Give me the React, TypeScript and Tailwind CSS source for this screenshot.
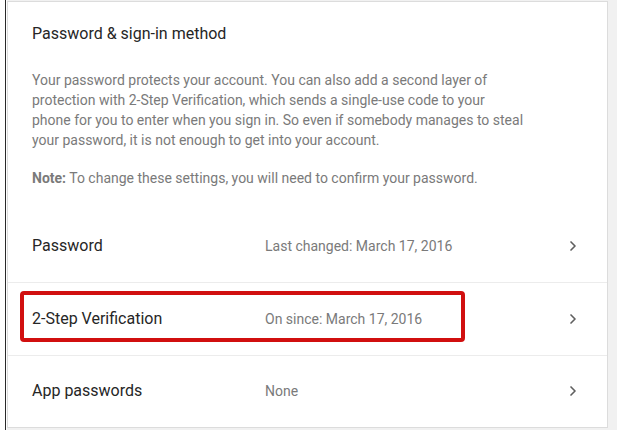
import { ChevronRight } from "lucide-react";

const rows = [
  { label: "Password", value: "Last changed: March 17, 2016" },
  { label: "2-Step Verification", value: "On since: March 17, 2016", marked: true },
  { label: "App passwords", value: "None" },
];

export default function App() {
  return (
    <div className="flex w-[617px] h-[430px] bg-white overflow-hidden" style={{ fontFamily: "Roboto, 'Liberation Sans', sans-serif" }}>
      <div className="w-[5px] shrink-0" />
      <div className="w-[1px] shrink-0 bg-[#2a2a2a]" />
      <div className="w-[1px] shrink-0" />
      <div className="flex-1 bg-[#f1f1f1] pt-[1px]">
        <div className="w-[601px] h-[427px] bg-white border border-[#dcdcdc] flex flex-col">
          {/* header */}
          <div className="px-6 pt-[22px] pb-[22px]">
            <h2 className="text-[16px] leading-5 text-[#262626]">Password &amp; sign-in method</h2>
            <p className="mt-[26px] w-[492px] text-[14px] leading-5 text-[#7a7a7a]">
              Your password protects your account. You can also add a second layer of protection with 2-Step
              Verification, which sends a single-use code to your phone for you to enter when you sign in. So even
              if somebody manages to steal your password, it is not enough to get into your account.
            </p>
            <p className="mt-[18px] text-[14px] leading-5 text-[#7a7a7a]">
              <span className="font-bold">Note:</span> To change these settings, you will need to confirm your password.
            </p>
          </div>

          {rows.map((r, i) => (
            <div
              key={r.label}
              className={`relative flex items-center h-[73px] pl-6 pr-[26px] ${i > 0 ? "border-t border-[#ececec]" : ""}`}
            >
              <span className="w-[233px] text-[16px] text-[#262626]">{r.label}</span>
              <span className="flex-1 text-[14px] text-[#7a7a7a]">{r.value}</span>
              <ChevronRight size={16} strokeWidth={2.5} className="text-[#5f5f5f]" />
              {r.marked && (
                <div className="absolute left-[12px] top-[8px] w-[445px] h-[51px] border-4 border-[#d10f0f] rounded-[4px]" />
              )}
            </div>
          ))}
        </div>
      </div>
    </div>
  );
}
